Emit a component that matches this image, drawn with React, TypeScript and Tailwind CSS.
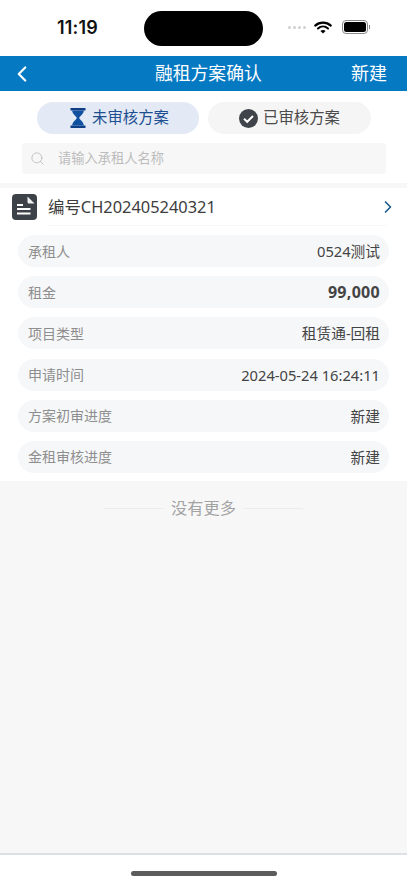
import { ChevronLeft, ChevronRight, Search } from "lucide-react";

const FONT = { fontFamily: '"Noto Sans", "Noto Sans CJK SC", sans-serif' };

const rows = [
  { label: "承租人", value: "0524测试" },
  { label: "租金", value: "99,000", bold: true },
  { label: "项目类型", value: "租赁通-回租" },
  { label: "申请时间", value: "2024-05-24 16:24:11" },
  { label: "方案初审进度", value: "新建" },
  { label: "金租审核进度", value: "新建" },
];

function StatusBar() {
  return (
    <div className="h-[56px] bg-white flex items-center pl-[57px] pr-[37px]">
      <span className="w-[40px] text-[18px] font-semibold text-[#111] tracking-[0.2px] mt-[-1px]" style={{ fontFamily: "Inter, sans-serif" }}>11:19</span>
      <div className="w-[119px] h-[35px] rounded-full bg-black ml-[47px] mt-[1px]" />
      <div className="flex items-center gap-[8px] mt-[-2px] ml-auto">
        <div className="flex gap-[2px]">
          {[0, 1, 2, 3].map((i) => (
            <div key={i} className="w-[3px] h-[3px] rounded-full bg-[#d0d0d0]" />
          ))}
        </div>
        <svg width="18" height="13" viewBox="0 0 18 13" fill="none">
          <path d="M1.2 4.6C5.6.6 12.4.6 16.8 4.6" stroke="#000" strokeWidth="2.1" strokeLinecap="round" />
          <path d="M4 7.5c2.9-2.6 7.1-2.6 10 0" stroke="#000" strokeWidth="2.1" strokeLinecap="round" />
          <path d="M9 12.6 6.4 9.9c1.5-1.2 3.7-1.2 5.2 0z" fill="#000" />
        </svg>
        <div className="flex items-center ml-[2px]">
          <div className="w-[26px] h-[14px] rounded-[4px] border border-[#888] p-[1px]">
            <div className="w-full h-full rounded-[2.5px] bg-black" />
          </div>
          <div className="w-[1px] h-[4px] bg-[#888] ml-[1px]" />
        </div>
      </div>
    </div>
  );
}

export default function App() {
  return (
    <div className="w-[407px] h-[883px] bg-white flex flex-col overflow-hidden" style={FONT}>
      <StatusBar />

      {/* nav */}
      <div className="h-[35px] bg-[#0679c3] flex items-center justify-between pl-[9px] pr-[20px] text-white relative">
        <ChevronLeft size={26} strokeWidth={2} />
        <span className="absolute left-[155px] text-[17.8px] leading-[35px]">融租方案确认</span>
        <span className="text-[18px]">新建</span>
      </div>

      {/* tabs */}
      <div className="flex gap-[9px] pl-[37px] mt-[11px]">
        <div className="w-[162px] h-[32px] rounded-full bg-[#e3eaf5] flex items-center pl-[33px] gap-[6px] text-[#1d4f91] text-[15.4px]">
          <svg width="16" height="20" viewBox="0 0 16 20">
            <path d="M0.5 0h15v2.6h-15zM0.5 17.4h15V20h-15z" fill="#0f3f86" />
            <path d="M2.2 2.6h11.6c0 3.2-3.4 5.2-4.7 7.4 1.3 2.2 4.7 4.2 4.7 7.4H2.2c0-3.2 3.4-5.2 4.7-7.4C5.6 7.8 2.2 5.8 2.2 2.6z" fill="#10509f" />
          </svg>
          <span>未审核方案</span>
        </div>
        <div className="w-[163px] h-[32px] rounded-full bg-[#f5f5f5] flex items-center pl-[31px] gap-[5px] text-[#4b4b4b] text-[15.4px]">
          <svg width="19" height="19" viewBox="0 0 19 19">
            <circle cx="9.5" cy="9.5" r="9.5" fill="#3f444a" />
            <path d="M5 9.8l3.2 3L14 7" fill="none" stroke="#fff" strokeWidth="2" />
          </svg>
          <span>已审核方案</span>
        </div>
      </div>

      {/* search */}
      <div className="mx-[22px] w-[364px] h-[31px] mt-[9px] bg-[#f7f7f7] rounded-[3px] flex items-center pl-[8px] text-[#bdbdbd]">
        <Search size={15} strokeWidth={1.4} />
        <span className="ml-[13px] text-[13.25px] text-[#bcbcbc]">请输入承租人名称</span>
      </div>

      <div className="h-[5px] bg-[#f7f7f7] mt-[9px]" />

      {/* card */}
      <div className="bg-white h-[293px] flex flex-col">
        <div className="h-[38px] flex items-center pl-[12px] pr-[12px] relative">
          <svg width="25" height="26" viewBox="0 0 25 26">
            <rect width="25" height="26" rx="4" fill="#3d4249" />
            <path d="M15.5 2.5 22.5 9.5h-5.5a1.5 1.5 0 0 1-1.5-1.5z" fill="#f0f1f2" />
            <rect x="5" y="10" width="6" height="2" fill="#fff" />
            <rect x="5" y="14" width="13.5" height="2" fill="#fff" />
            <rect x="5" y="18.5" width="13.5" height="2" fill="#fff" />
          </svg>
          <span className="ml-[11px] text-[16.4px] text-[#3d3d3d]">编号CH202405240321</span>
          <ChevronRight size={20} strokeWidth={2} className="ml-auto text-[#1d5a8c] mr-[-3px]" />
          <div className="absolute left-[48px] right-[20px] bottom-0 h-px bg-[#f7f7f7]" />
        </div>

        <div className="flex flex-col gap-[9.2px] mt-[9px] px-[18px]">
          {rows.map((r) => (
            <div key={r.label} className="h-[32px] shrink-0 rounded-full bg-[#f6f7f9] flex items-center justify-between pl-[10px] pr-[9px] text-[14px]">
              <span className="text-[#8e8e8e]">{r.label}</span>
              <span className={r.bold ? "text-[#444] font-bold text-[16px] tracking-[0.3px]" : "text-[#444] text-[14.7px]"}>{r.value}</span>
            </div>
          ))}
        </div>
      </div>

      {/* footer area */}
      <div className="flex-1 bg-[#f7f7f7] pt-[16px]">
        <div className="flex items-center justify-center gap-[7px]">
          <div className="w-[60px] h-px bg-[#ececec]" />
          <span className="text-[16.25px] leading-[22px] text-[#a3a3a3]">没有更多</span>
          <div className="w-[60px] h-px bg-[#ececec]" />
        </div>
      </div>

      <div className="h-[30px] bg-white border-t-2 border-[#dde1e7] flex justify-center pt-[16px]">
        <div className="w-[146px] h-[5px] rounded-full bg-[#5c5c5c]" />
      </div>
    </div>
  );
}
